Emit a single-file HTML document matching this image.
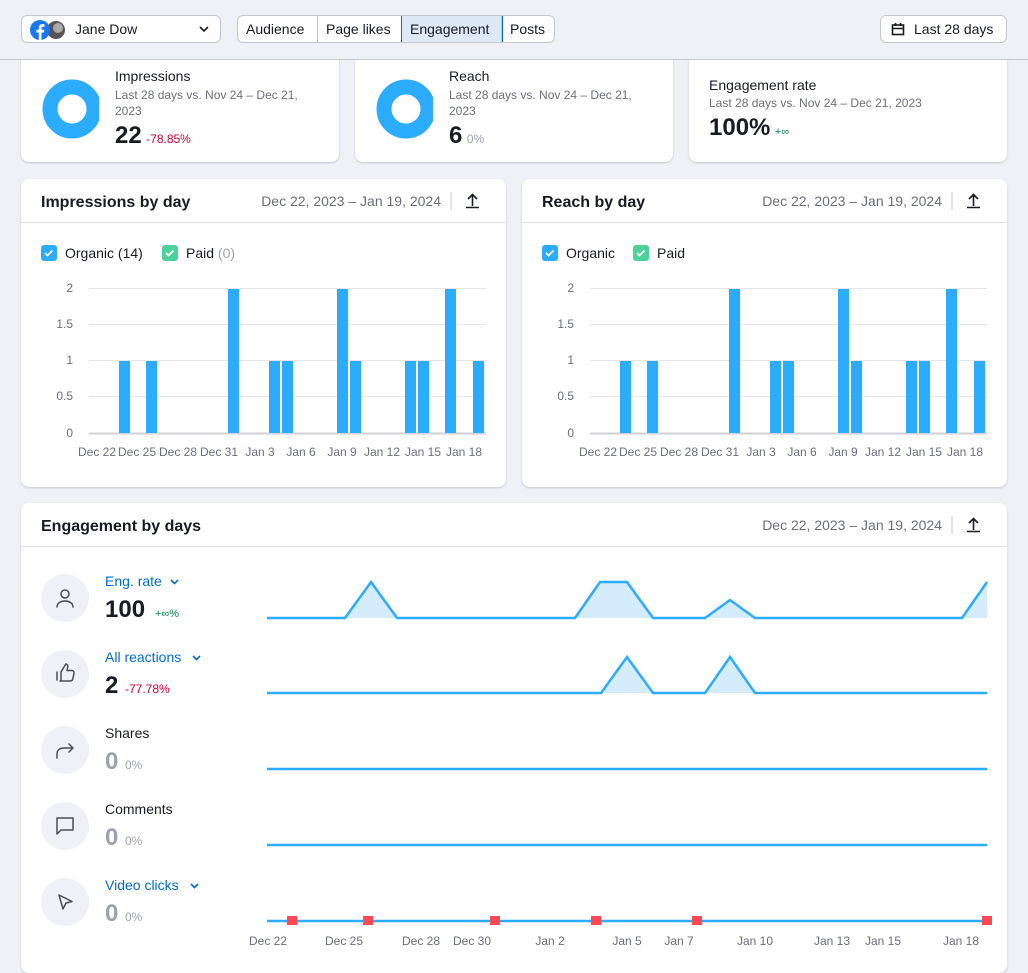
<!DOCTYPE html>
<html><head><meta charset="utf-8"><style>
*{box-sizing:border-box;margin:0;padding:0}
body{width:1028px;height:964px;overflow:hidden;background:#f0f1f7;font-family:"Liberation Sans",sans-serif;color:#191b23;position:relative}
.a{position:absolute}
.card{position:absolute;background:#fff;border-radius:8px;box-shadow:0 1px 2px rgba(0,0,0,.18)}
.btn{position:absolute;top:15px;height:28px;border:1px solid #c4c7cf;border-radius:6px;background:#fff;font-size:14px;line-height:26px;z-index:3}
.seg{display:inline-block;padding:0 8px;height:26px;border-right:1px solid #c4c7cf;float:left}
.t{font-size:14px}.s{font-size:12px;color:#6c6e79;line-height:16px}
.big{font-size:24px;font-weight:bold}
</style></head><body>
<div class="a" style="left:0;top:0;width:1028px;height:60px;background:#f0f1f7;border-bottom:1px solid #c4c7cf;z-index:2"></div>
<div class="btn" style="left:21px;width:200px">
<svg class="a" style="left:8px;top:4px" width="40" height="20"><circle cx="26" cy="10" r="9" fill="#555"/><circle cx="28" cy="8" r="5" fill="#aaa"/><circle cx="10" cy="10" r="10" fill="#1877f2"/><path d="M11.5 20V12.5h2.4l.4-2.8h-2.8V8c0-.8.3-1.3 1.4-1.3h1.5V4.2c-.3 0-1.1-.1-2.1-.1-2.1 0-3.5 1.3-3.5 3.6v2H6.4v2.8h2.4V20z" fill="#fff"/></svg>
<span class="a" style="left:53px">Jane Dow</span>
<svg class="a" style="left:177px;top:9px" width="10" height="8"><path d="M1 2l4 4 4-4" stroke="#191b23" stroke-width="1.6" fill="none"/></svg></div>
<div class="btn" style="left:237px;width:318px;overflow:hidden">
<span class="seg" style="width:80px">Audience</span><span class="seg" style="width:84px">Page likes</span><span class="seg" style="width:100px;background:#dde9f7;outline:1px solid #006dca">Engagement</span><span class="seg" style="border:0">Posts</span></div>
<div class="btn" style="left:880px;width:127px"><svg class="a" style="left:10px;top:6px" width="14" height="14"><rect x="1.5" y="3" width="11" height="9.5" fill="none" stroke="#191b23" stroke-width="1.6"/><path d="M1.5 6.5h11M4.5 1v3M9.5 1v3" stroke="#191b23" stroke-width="1.6"/></svg><span class="a" style="left:33px">Last 28 days</span></div>

<div class="card" style="left:21px;top:50px;width:318px;height:112px">
<svg class="a" style="left:20px;top:28px" width="60" height="62"><circle cx="31" cy="31" r="22" fill="none" stroke="#2bacff" stroke-width="15"/><rect x="58" y="0" width="4" height="62" fill="#fff"/></svg>
<div class="a t" style="left:94px;top:18px">Impressions</div>
<div class="a s" style="left:94px;top:37px;width:210px">Last 28 days vs. Nov 24 – Dec 21, 2023</div>
<div class="a" style="left:94px;top:72px"><span class="big">22</span> <span style="font-size:12px;color:#d1002f">-78.85%</span></div></div>
<div class="card" style="left:355px;top:50px;width:318px;height:112px">
<svg class="a" style="left:20px;top:28px" width="60" height="62"><circle cx="31" cy="31" r="22" fill="none" stroke="#2bacff" stroke-width="15"/><rect x="58" y="0" width="4" height="62" fill="#fff"/></svg>
<div class="a t" style="left:94px;top:18px">Reach</div>
<div class="a s" style="left:94px;top:37px;width:210px">Last 28 days vs. Nov 24 – Dec 21, 2023</div>
<div class="a" style="left:94px;top:72px"><span class="big">6</span> <span style="font-size:12px;color:#a0a2ab">0%</span></div></div>
<div class="card" style="left:689px;top:50px;width:318px;height:112px">
<div class="a t" style="left:20px;top:27px">Engagement rate</div>
<div class="a s" style="left:20px;top:45px">Last 28 days vs. Nov 24 – Dec 21, 2023</div>
<div class="a" style="left:20px;top:64px"><span class="big">100%</span> <span style="font-size:11px;color:#008a4e">+∞</span></div></div>

<div class="card" style="left:21px;top:179px;width:485px;height:308px"></div>
<div class="card" style="left:522px;top:179px;width:485px;height:308px"></div>
<div class="card" style="left:21px;top:503px;width:986px;height:470px"></div>
<svg class="a" style="left:0;top:0" width="1028" height="964" font-family="Liberation Sans,sans-serif">
<defs>
<clipPath id="cp"><rect x="250" y="925" width="760" height="30"/></clipPath>
<g id="ch">
<g stroke="#e6e7ed" stroke-width="1"><path d="M89 288.5H486M89 324.5H486M89 360.5H486M89 396.5H486"/></g>
<path d="M89 433.5H486" stroke="#d0d2d9" stroke-width="2"/>
<g fill="#2bacff">
<rect x="119" y="361" width="11" height="72"/><rect x="146" y="361" width="11" height="72"/>
<rect x="228" y="289" width="11" height="144"/><rect x="269" y="361" width="11" height="72"/><rect x="282" y="361" width="11" height="72"/>
<rect x="337" y="289" width="11" height="144"/><rect x="350" y="361" width="11" height="72"/><rect x="405" y="361" width="11" height="72"/><rect x="418" y="361" width="11" height="72"/><rect x="445" y="289" width="11" height="144"/><rect x="473" y="361" width="11" height="72"/></g>
<g font-size="12" fill="#6c6e79" text-anchor="end"><text x="73" y="292">2</text><text x="73" y="328">1.5</text><text x="73" y="364">1</text><text x="73" y="400">0.5</text><text x="73" y="437">0</text></g>
<g font-size="12" fill="#6c6e79" text-anchor="middle"><text x="97" y="456">Dec 22</text><text x="137" y="456">Dec 25</text><text x="178" y="456">Dec 28</text><text x="219" y="456">Dec 31</text><text x="260" y="456">Jan 3</text><text x="301" y="456">Jan 6</text><text x="342" y="456">Jan 9</text><text x="382" y="456">Jan 12</text><text x="423" y="456">Jan 15</text><text x="464" y="456">Jan 18</text></g>
<path d="M21 222.5H506" stroke="#e0e1e9"/>
<path d="M451 192V210" stroke="#c4c7cf"/>
<path d="M466 207.5H479M472.5 206V195M468 199l4.5-4.5L477 199" stroke="#191b23" stroke-width="1.6" fill="none"/>
<rect x="41" y="245" width="16" height="16" rx="3" fill="#2bacff"/><path d="M45 253l2.5 2.5 5-5" stroke="#fff" stroke-width="1.8" fill="none"/>
</g>
<g id="pd"><rect x="0" y="245" width="16" height="16" rx="3" fill="#4dd19a"/><path d="M4 253l2.5 2.5 5-5" stroke="#fff" stroke-width="1.8" fill="none"/></g>
</defs>
<use href="#ch"/>
<use href="#pd" x="162"/>
<text x="41" y="207" font-size="16" font-weight="bold" fill="#191b23">Impressions by day</text>
<text x="441" y="206" font-size="14" fill="#6c6e79" text-anchor="end">Dec 22, 2023 – Jan 19, 2024</text>
<text x="65" y="258" font-size="14" fill="#191b23">Organic (14)</text>
<text x="186" y="258" font-size="14" fill="#191b23">Paid <tspan fill="#a0a2ab">(0)</tspan></text>
<use href="#ch" x="501"/>
<use href="#pd" x="633"/>
<text x="542" y="207" font-size="16" font-weight="bold" fill="#191b23">Reach by day</text>
<text x="942" y="206" font-size="14" fill="#6c6e79" text-anchor="end">Dec 22, 2023 – Jan 19, 2024</text>
<text x="566" y="258" font-size="14" fill="#191b23">Organic</text>
<text x="657" y="258" font-size="14" fill="#191b23">Paid</text>

<text x="41" y="531" font-size="16" font-weight="bold" fill="#191b23">Engagement by days</text>
<text x="942" y="530" font-size="14" fill="#6c6e79" text-anchor="end">Dec 22, 2023 – Jan 19, 2024</text>
<path d="M21 546.5H1007" stroke="#e0e1e9"/>
<path d="M952 516V534" stroke="#c4c7cf"/>
<path d="M967 531.5H980M973.5 530V519M969 523l4.5-4.5L978 523" stroke="#191b23" stroke-width="1.6" fill="none"/>
<g fill="#d5ecfc"><path d="M345 618L371 582L397 618ZM575 618L600 582L627 582L653 618ZM705 618L730 600L755 618ZM962 618L987 582V618ZM601 693L627 657L653 693ZM705 693L730 657L755 693Z"/></g>
<g stroke="#2bacff" stroke-width="2.5" fill="none">
<path d="M267 618H345L371 582L397 618H575L600 582H627L653 618H705L730 600L755 618H962L987 582"/>
<path d="M267 693H601L627 657L653 693H705L730 657L755 693H987"/>
<path d="M267 769H987M267 845H987M267 921H987"/></g>
<g fill="#ff4953"><rect x="287" y="916" width="10" height="9"/><rect x="363" y="916" width="10" height="9"/><rect x="490" y="916" width="10" height="9"/><rect x="591" y="916" width="10" height="9"/><rect x="692" y="916" width="10" height="9"/><rect x="982" y="916" width="10" height="9"/></g>
<g font-size="12" fill="#6c6e79" text-anchor="middle" clip-path="url(#cp)"><text x="268" y="945">Dec 22</text><text x="344" y="945">Dec 25</text><text x="421" y="945">Dec 28</text><text x="472" y="945">Dec 30</text><text x="550" y="945">Jan 2</text><text x="627" y="945">Jan 5</text><text x="679" y="945">Jan 7</text><text x="755" y="945">Jan 10</text><text x="832" y="945">Jan 13</text><text x="883" y="945">Jan 15</text><text x="961" y="945">Jan 18</text></g>
<g fill="#f0f1f7"><circle cx="65" cy="598" r="24"/><circle cx="65" cy="674" r="24"/><circle cx="65" cy="750" r="24"/><circle cx="65" cy="826" r="24"/><circle cx="65" cy="902" r="24"/></g>
<g stroke="#4a4c56" stroke-width="1.5" fill="none" stroke-linecap="round" stroke-linejoin="round">
<circle cx="65" cy="594" r="4"/><path d="M57 607c0-4 4-6 8-6s8 2 8 6"/>
<path d="M57 672v8M60 681h10c1.5 0 2.5-1 2.8-2l1.2-6c.2-1.3-.8-2.5-2.2-2.5H67l.8-4c.2-1.5-1-2.5-2-2.5L61 672v9"/>
<path d="M57 758v-4c0-4 3-6 7-6h9M69 744l4 4-4 4"/>
<path d="M57 818h16v12H61l-4 4z"/>
<path d="M59 895l13 6.5-6 1.5-3 6z"/></g>
<text x="105" y="586" font-size="14" fill="#006dca">Eng. rate</text><path d="M171 580l3.5 3.5 3.5-3.5" stroke="#006dca" stroke-width="1.6" fill="none"/>
<text x="105" y="617" font-size="24" font-weight="bold" fill="#191b23">100</text><text x="155" y="617" font-size="11" fill="#008a4e">+∞%</text>
<text x="105" y="662" font-size="14" fill="#006dca">All reactions</text><path d="M193 656l3.5 3.5 3.5-3.5" stroke="#006dca" stroke-width="1.6" fill="none"/>
<text x="105" y="693" font-size="24" font-weight="bold" fill="#191b23">2</text><text x="125" y="693" font-size="12" fill="#d1002f">-77.78%</text>
<text x="105" y="738" font-size="14" fill="#191b23">Shares</text>
<text x="105" y="769" font-size="24" font-weight="bold" fill="#a0a2ab">0</text><text x="125" y="769" font-size="12" fill="#a0a2ab">0%</text>
<text x="105" y="814" font-size="14" fill="#191b23">Comments</text>
<text x="105" y="845" font-size="24" font-weight="bold" fill="#a0a2ab">0</text><text x="125" y="845" font-size="12" fill="#a0a2ab">0%</text>
<text x="105" y="890" font-size="14" fill="#006dca">Video clicks</text><path d="M191 884l3.5 3.5 3.5-3.5" stroke="#006dca" stroke-width="1.6" fill="none"/>
<text x="105" y="921" font-size="24" font-weight="bold" fill="#a0a2ab">0</text><text x="125" y="921" font-size="12" fill="#a0a2ab">0%</text>
</svg>
</body></html>
